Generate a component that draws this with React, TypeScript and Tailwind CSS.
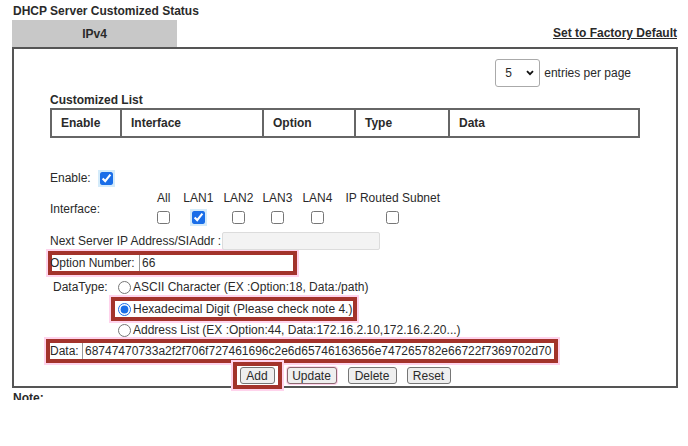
import React from 'react';

const cols = [
  { label: 'Enable', w: 'w-[68px]' },
  { label: 'Interface', w: 'w-[142px]' },
  { label: 'Option', w: 'w-[92px]' },
  { label: 'Type', w: 'w-[94px]' },
  { label: 'Data', w: 'flex-1' },
];

const ifaces = [
  { label: 'All', checked: false, cls: '' },
  { label: 'LAN1', checked: true, cls: 'ml-[13px]' },
  { label: 'LAN2', checked: false, cls: 'ml-[10px]' },
  { label: 'LAN3', checked: false, cls: 'ml-[9px]' },
  { label: 'LAN4', checked: false, cls: 'ml-[10px]' },
  { label: 'IP Routed Subnet', checked: false, cls: 'ml-[13px]' },
];

const hexData =
  '68747470733a2f2f706f727461696c2e6d65746163656e747265782e66722f7369702d70';

function Check({ checked }: { checked: boolean }) {
  return (
    <input
      type="checkbox"
      defaultChecked={checked}
      className={
        checked
          ? 'm-0 w-[13px] h-[13px] accent-[#1a6ee8] outline-2 outline-[#d4ebfa]'
          : 'm-0 w-[13px] h-[13px]'
      }
    />
  );
}

export default function App() {
  return (
    <div className="w-[688px] h-[446px] bg-white overflow-hidden font-['Liberation_Sans',Arial,sans-serif] text-[12px] leading-[14px] text-[#2a2a2a]">
      <div className="pt-[4px] pl-[13px] font-bold">DHCP Server Customized Status</div>

      <div className="mt-[2px] ml-[12px] mr-[11px] h-[27px] flex">
        <div className="w-[165px] h-full bg-[#c8c8c8] flex items-center justify-center font-bold">
          IPv4
        </div>
        <a className="ml-auto mt-[6px] font-bold underline">Set to Factory Default</a>
      </div>

      <div className="ml-[12px] mr-[10px] border-2 border-[#555] pl-[36px] pb-[2px]">
        {/* entries per page */}
        <div className="mt-[10px] h-[28px] flex items-center justify-end pr-[45px]">
          <div className="relative">
            <select
              defaultValue="5"
              className="appearance-none w-[45px] h-[28px] border border-[#aaa] rounded-[3px] pl-[9px] bg-white text-[12px]"
            >
              <option>5</option>
              <option>10</option>
              <option>20</option>
            </select>
            <svg
              className="absolute right-[6px] top-[11px] pointer-events-none"
              width="8"
              height="6"
              viewBox="0 0 8 6"
            >
              <path d="M1 1.2 L4 4.2 L7 1.2" fill="none" stroke="#111" strokeWidth="1.8" />
            </svg>
          </div>
          <span className="ml-[4px]">entries per page</span>
        </div>

        <div className="mt-[6px] font-bold">Customized List</div>

        {/* customized list table */}
        <div className="mt-[1px] w-[590px] h-[30px] border-2 border-[#666] flex font-bold">
          {cols.map((c, i) => (
            <div
              key={c.label}
              className={`${c.w} flex items-center pl-[9px] ${i > 0 ? 'border-l-2 border-[#666]' : ''}`}
            >
              {c.label}
            </div>
          ))}
        </div>

        {/* enable */}
        <div className="mt-[33px] h-[14px] flex items-center">
          <span className="w-[50px]">Enable:</span>
          <Check checked />
        </div>

        {/* interface */}
        <div className="mt-[6px] flex">
          <span className="w-[107px] mt-[11px]">Interface:</span>
          <div className="flex">
            {ifaces.map(f => (
              <div key={f.label} className={`flex flex-col items-center ${f.cls}`}>
                <span className="whitespace-nowrap">{f.label}</span>
                <span className="mt-[6px] h-[13px] flex">
                  <Check checked={f.checked} />
                </span>
              </div>
            ))}
          </div>
        </div>

        {/* next server */}
        <div className="mt-[8px] h-[18px] flex items-center">
          <span className="w-[172px]">Next Server IP Address/SIAddr :</span>
          <input className="w-[158px] h-[18px] bg-[#f3f3f3] border border-[#dcdcdc] rounded-[2px]" />
        </div>

        {/* option number */}
        <div className="mt-[1px] -ml-[2px] w-[249px] h-[24px] border-4 border-[#a3332b] shadow-[0_0_0_2px_#ffd3ec] flex items-center">
          <span className="-ml-[2px] w-[89px] whitespace-nowrap">Option Number:</span>
          <input
            defaultValue="66"
            className="flex-1 min-w-0 h-[16px] border-l border-[#999] pl-[2px] text-[12px] outline-none"
          />
        </div>

        {/* data type */}
        <div className="mt-[5px] h-[14px] flex items-center">
          <span className="ml-[3px] w-[65px]">DataType:</span>
          <input type="radio" name="dt" className="m-0 w-[13px] h-[13px]" />
          <span className="ml-[2px]">ASCII Character (EX :Option:18, Data:/path)</span>
        </div>

        <div className="mt-[3px] ml-[61px] w-[246px] h-[24px] border-4 border-[#a3332b] shadow-[0_0_0_2px_#ffd3ec] flex items-center">
          <input
            type="radio"
            name="dt"
            defaultChecked
            className="m-0 ml-[3px] w-[13px] h-[13px] accent-[#1a6ee8]"
          />
          <span className="ml-[2px] whitespace-nowrap">Hexadecimal Digit (Please check note 4.)</span>
        </div>

        <div className="mt-[2px] h-[14px] flex items-center pl-[68px]">
          <input type="radio" name="dt" className="m-0 w-[13px] h-[13px]" />
          <span className="ml-[2px]">Address List (EX :Option:44, Data:172.16.2.10,172.16.2.20...)</span>
        </div>

        {/* data */}
        <div className="mt-[2px] -ml-[4px] w-[512px] h-[24px] border-4 border-[#a3332b] shadow-[0_0_0_2px_#ffd3ec] flex items-center">
          <span className="w-[32px]">Data:</span>
          <input
            defaultValue={hexData}
            className="flex-1 min-w-0 h-[16px] border-l border-[#999] pl-[2px] text-[12px] outline-none"
          />
        </div>

        {/* buttons */}
        <div className="mt-[4px] -ml-[36px] h-[17px] flex items-center justify-center pr-[7px]">
          <div className="h-[27px] border-4 border-[#a3332b] shadow-[0_0_0_2px_#ffd3ec] flex items-center px-[3px]">
            <button className="w-[35px] h-[17px] bg-[#efefef] border border-[#767676] rounded-[3px] text-[12px] leading-none">
              Add
            </button>
          </div>
          <button className="ml-[5px] w-[50px] h-[17px] bg-[#efefef] border border-[#8a6a70] rounded-[3px] shadow-[0_0_0_1px_#ffd3ec] text-[12px] leading-none">
            Update
          </button>
          <button className="ml-[11px] w-[49px] h-[17px] bg-[#efefef] border border-[#767676] rounded-[3px] text-[12px] leading-none">
            Delete
          </button>
          <button className="ml-[10px] w-[44px] h-[17px] bg-[#efefef] border border-[#767676] rounded-[3px] text-[12px] leading-none">
            Reset
          </button>
        </div>
      </div>

      <div className="mt-[3px] ml-[13px] h-[9px] overflow-hidden font-bold">Note:</div>
    </div>
  );
}
